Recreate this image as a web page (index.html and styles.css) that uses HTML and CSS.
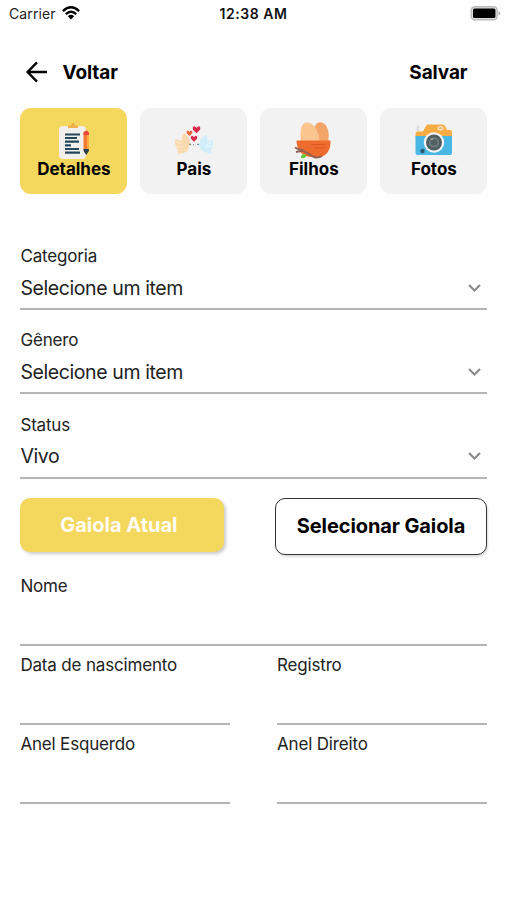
FILE: index.html
```html
<!DOCTYPE html>
<html lang="pt-BR">
<head>
<meta charset="utf-8">
<title>Detalhes</title>
<link rel="stylesheet" href="styles.css">
</head>
<body>
<div class="status-bar">
  <span class="carrier"><span>Carrier</span>
    <svg width="18" height="14" viewBox="0 0 18 14" fill="none" stroke="#000" stroke-width="2.3"><path d="M.9 5.1Q9-2.5 17.1 5.1M3.8 8.1Q9 3.3 14.2 8.1"/><path d="M5.9 10.2Q9 7.5 12.1 10.2L9 13.6Z" fill="#000" stroke="none"/></svg>
  </span>
  <span class="clock">12:38 AM</span>
  <svg class="battery" width="31" height="15" viewBox="0 0 31 15"><rect x="1.200" y=".8" width="26" height="13" rx="3.6" fill="#ddd" stroke="#bbb" stroke-width="1.4"/><rect x="3" y="2.6" width="22.400" height="9.400" rx="1.600"/><path d="M28.600 5Q32 7.300 28.600 9.600Z" fill="#aaa"/></svg>
</div>
<header class="header">
  <a class="back"><svg width="22" height="22" viewBox="0 0 22 22" fill="none" stroke="#000" stroke-width="2.300"><path d="M21 11H2M11 1.400L1.600 11l9.400 9.600"/></svg><span>Voltar</span></a>
  <span class="save">Salvar</span>
</header>
<nav class="tabs">
  <div class="tab active">
    <svg width="40" height="38" viewBox="0 0 40 38"><rect x="5" y="4" width="27" height="33" rx="4" fill="#f1efec"/><path d="M14 6V3.500h3q2-6 4 0h3V6Z" fill="#f5ae4c"/><path d="M11 12.500h15M11 16h12M11 19.700h14M11 23.300h6M11 27h14M11 30.700h15" stroke="#24485b" stroke-width="2.200"/><path d="M29.500 10.500h5.500V28l-2.800 4.500-2.700-4.500Z" fill="#f47b31"/><path d="M33 12h2v16h-2Z" fill="#ffad43"/><path d="M29.500 13v-2.200q2.700-4.800 5.500 0V13Z" fill="#e9483e"/><path d="M29.500 27h5.500l-.4 2.500-2.400 3.500-2.300-3.500Z" fill="#234151"/></svg>
    <span class="tab-text">Detalhes</span>
  </div>
  <div class="tab">
    <svg width="40" height="38" viewBox="0 0 40 38"><path d="M10.500 11q6 4.700 5.700 10.300l1.800 1.200-3 1.500q-.3 6-6 7l-4.500 1q-2-.7-.5-3.500Q.3 23 1 17L8 19Q6.500 15 10.500 11Z" fill="#fbdab0"/><path d="M1.500 19l6 3M2.500 25l7-.5" stroke="#ffe8cd" stroke-width="1.200"/><path d="M31.500 13q-5 3-5.700 8l-2.800 1.700 3 1.800q.5 5 6 6l4 1q2-.5 1-3Q40 23 38.800 17.500L33 20q1.500-3.500-1.500-7Z" fill="#d2eefa"/><path d="M38 20l-6 3.500M38 24l-7 1" stroke="#e8f8ff" stroke-width="1.200"/><path d="M15 22.300h2m2 .4h1m3-.4h2" stroke="#697983"/><g fill="#d92c4c"><path d="M22.500 11.300l-3.500-3.600Q17.900 4.400 20.600 4.200L22.500 5.800l1.900-1.600Q27.100 4.400 26 7.700Z"/><path d="M20 19.800l-3-3.100Q16.100 14 18.300 13.700L20 15l1.700-1.300q2.200.3 1.300 3Z"/></g><path d="M15.500 14l-2.600-2.600Q12 8.800 14 8.500l1.500 1.200L17 8.500q2 .3 1.100 2.900Z" fill="#e9653b"/></svg>
    <span class="tab-text">Pais</span>
  </div>
  <div class="tab">
    <svg width="40" height="38" viewBox="0 0 40 38"><path d="M17 22Q19-2 28 .5q6 1.700 6.800 12L34 22Z" fill="#f3a468"/><path d="M7 21Q5 3 11 .8Q18-1.200 22.500 8q4 7 2.500 13Z" fill="#fac58e"/><path d="M2.500 18.500h34v3Q36 32 27 35H16Q3 33 2.500 18.500Z" fill="#ed6c2d"/><path d="M17 22.500h14M20 26h11" stroke="#dc5723" stroke-width="1.200"/><path d="M1 25.500q3 2 7 2.500l12 7q4 1.500 8-1M2 30l7-1.500" fill="none" stroke="#946052" stroke-width="2"/><path d="M7 36q-.7-5 5.500-3.500Q12 37 7 36Z" fill="#63cb3b"/></svg>
    <span class="tab-text">Filhos</span>
  </div>
  <div class="tab">
    <svg width="40" height="38" viewBox="0 0 40 38"><rect x="2.500" y="3.500" width="3" height="6" rx="1.400" fill="#ddd"/><path d="M1.500 15V11.500q0-2 2-2H9L12 4q.6-1.500 2-1.500h15q1.400 0 2 1.500l2 4H36q2 0 2 2V15Z" fill="#f7ab43"/><path d="M1.500 14H38v17q0 2-2 2H3.500q-2 0-2-2Z" fill="#48b7e4"/><rect x="24" y="4.800" width="5" height="3" rx="1.300" fill="#e7b36c" stroke="#fff"/><circle cx="20" cy="20.500" r="10.200" fill="#f3f3f3"/><circle cx="20" cy="20.500" r="8" fill="#4e5d61"/><circle cx="20" cy="20.500" r="5.300" fill="#6d7a7a"/><circle cx="20" cy="20.500" r="3.300" fill="#526061"/><path d="M17 17.500l2-1" stroke="#a3a8a0" stroke-width="1.500"/><circle cx="8.500" cy="29" r="2.200" fill="#30576c"/></svg>
    <span class="tab-text">Fotos</span>
  </div>
</nav>
<main class="form">
  <div class="select-field"><label class="label">Categoria</label><div class="value"><span>Selecione um item</span><svg class="chevron" width="13" height="8" viewBox="0 0 13 8"><path d="M1 1l5.500 5.500L12 1"/></svg></div></div>
  <div class="select-field"><label class="label">Gênero</label><div class="value"><span>Selecione um item</span><svg class="chevron" width="13" height="8" viewBox="0 0 13 8"><path d="M1 1l5.500 5.500L12 1"/></svg></div></div>
  <div class="select-field"><label class="label">Status</label><div class="value"><span>Vivo</span><svg class="chevron" width="13" height="8" viewBox="0 0 13 8"><path d="M1 1l5.500 5.500L12 1"/></svg></div></div>
  <div class="actions"><button class="current">Gaiola Atual</button><button class="choose">Selecionar Gaiola</button></div>
  <div class="text-fields">
    <div class="text-field wide"><label class="label">Nome</label></div>
    <div class="text-field"><label class="label">Data de nascimento</label></div>
    <div class="text-field"><label class="label">Registro</label></div>
    <div class="text-field"><label class="label">Anel Esquerdo</label></div>
    <div class="text-field"><label class="label">Anel Direito</label></div>
  </div>
</main>
</body>
</html>
```
FILE: styles.css
```css
* { box-sizing: border-box; }
body { margin: 0; min-height: 900px; background: #fefefe; color: #222; font-family: Inter, "Liberation Sans", sans-serif; }
svg { display: block; flex: none; }
.status-bar { height: 28px; padding: 0 6px 0 9px; display: grid; grid-template-columns: 1fr auto 1fr; align-items: center; font-size: 14px; line-height: 20px; }
.carrier { display: flex; align-items: center; gap: 6px; letter-spacing: .1px; }
.carrier svg { margin-top: -2px; }
.clock { color: #111; font-weight: 600; letter-spacing: .55px; margin-right: 3px; }
.battery { justify-self: end; margin-top: -2px; }
.header { height: 80px; padding: 8px 39.500px 0 25.500px; display: flex; align-items: center; justify-content: space-between; color: #000; font-size: 19px; font-weight: 700; letter-spacing: -.1px; }
.back { display: flex; align-items: center; gap: 15px; }
.save { padding-top: 1px; }
.tabs { padding: 0 20px 0 20.400px; display: grid; grid-template-columns: repeat(4, 107px); gap: 13px; }
.tab { height: 86px; padding-top: 14px; border-radius: 11px; background: #f2f2f2; display: flex; flex-direction: column; align-items: center; color: #000; font-size: 17px; font-weight: 700; line-height: 20px; }
.active { background: #f4d75d; }
.tab-text { margin-top: -1px; }
.form { padding: 51px 20px 0 20.400px; }
.select-field { height: 84.300px; }
.label { display: block; width: max-content; font-size: 17px; line-height: 22px; letter-spacing: -.17px; }
.value { height: 43px; padding: 0 6px 0 0; border-bottom: 2px solid #b5b5b5; display: flex; align-items: center; justify-content: space-between; font-size: 19.500px; line-height: 24px; letter-spacing: -.4px; }
.chevron { fill: none; stroke: #888; stroke-width: 2; }
.actions { display: flex; justify-content: space-between; align-items: flex-start; height: 77px; }
button { font: 700 20px/24px Inter, "Liberation Sans", sans-serif; border-radius: 10px; padding: 0; }
.current { width: 204px; height: 54px; padding-right: 7px; border: 0; color: #fffdf5; background: #f4d75d; box-shadow: 2px 2px 3px #ccc; }
.choose { width: 212px; height: 57px; border: 1.500px solid #333; color: #000; background: #fefefe; box-shadow: 1px 2px 2px #ddd; letter-spacing: -.1px; }
.text-fields { display: grid; grid-template-columns: 210px 210px; justify-content: space-between; grid-auto-rows: 79.300px; }
.text-field { height: 70.700px; border-bottom: 2px solid #b5b5b5; }
.wide { grid-column: 1 / -1; }
```
